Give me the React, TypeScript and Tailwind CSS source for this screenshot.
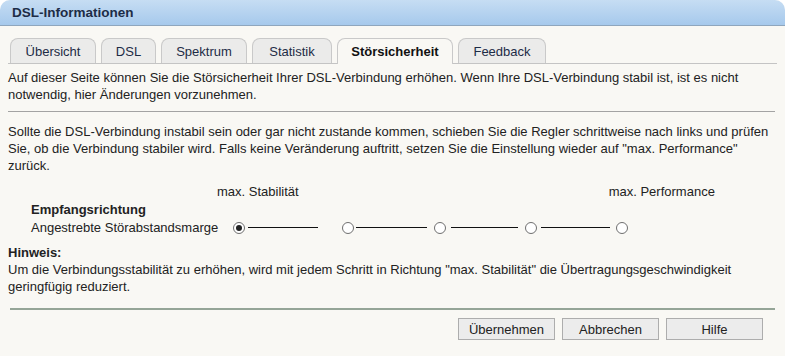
import React from "react"

const tabs = [
  { label: "Übersicht", w: "w-[86px]" },
  { label: "DSL", w: "w-[55px]" },
  { label: "Spektrum", w: "w-[86px]" },
  { label: "Statistik", w: "w-[80px]" },
  { label: "Störsicherheit", w: "w-[116px]", active: true },
  { label: "Feedback", w: "w-[88px]" },
]

const Radio = ({ checked = false }: { checked?: boolean }) => (
  <span className="flex h-[12px] w-[12px] shrink-0 items-center justify-center rounded-full border border-[#6f6f6f] bg-white">
    {checked && <span className="h-[6px] w-[6px] rounded-full bg-[#222]" />}
  </span>
)

const Line = ({ w }: { w: string }) => <span className={`h-px bg-[#111] ${w}`} />

export default function App() {
  return (
    <div className="h-[356px] w-[785px] overflow-hidden bg-white text-[13px] leading-[17px] text-[#222]" style={{ fontFamily: '"Liberation Sans", Arial, sans-serif' }}>
      <div className="h-full rounded-t-[10px] bg-[#f9f8f4]">
        <div className="flex h-[26px] items-center rounded-t-[10px] border-b border-[#8fa6bd] bg-gradient-to-b from-[#c6ddf3] to-[#a6c9ec] pl-[12px] text-[13.5px] font-bold text-[#1d2c46]">
          DSL-Informationen
        </div>

        <div className="px-[8px]">
          <div className="mt-[12px] flex gap-[5px] border-b border-[#c4c4c4] pl-[2px]">
            {tabs.map((t) => (
              <div
                key={t.label}
                className={`flex h-[25px] items-center justify-center rounded-t-[8px] border border-b-0 border-[#c9c9c9] ${t.w} ${
                  t.active ? "-mb-px h-[26px] bg-[#f9f8f4] font-bold text-[#111]" : "bg-[#ebebea] text-[#1d2c46]"
                }`}
              >
                {t.label}
              </div>
            ))}
          </div>

          <p className="mt-[5px]">
            Auf dieser Seite können Sie die Störsicherheit Ihrer DSL-Verbindung erhöhen. Wenn Ihre DSL-Verbindung stabil ist, ist es nicht notwendig, hier Änderungen vorzunehmen.
          </p>
          <div className="mt-[8px] h-px w-[767px] bg-[#a3a3a3]" />

          <p className="mt-[11px] -mr-[4px]">
            Sollte die DSL-Verbindung instabil sein oder gar nicht zustande kommen, schieben Sie die Regler schrittweise nach links und prüfen Sie, ob die Verbindung stabiler wird. Falls keine Veränderung auftritt, setzen Sie die Einstellung wieder auf "max. Performance" zurück.
          </p>

          <div className="mt-[9px] flex">
            <span className="ml-[209px]">max. Stabilität</span>
            <span className="ml-[310px]">max. Performance</span>
          </div>
          <div className="mt-px pl-[23px] font-bold">Empfangsrichtung</div>
          <div className="mt-px flex items-center pl-[23px]">
            <span className="w-[202px]">Angestrebte Störabstandsmarge</span>
            <Radio checked />
            <span className="ml-[3px]"><Line w="block w-[70px]" /></span>
            <span className="ml-[24px]"><Radio /></span>
            <span className="ml-[2px]"><Line w="block w-[71px]" /></span>
            <span className="ml-[7px]"><Radio /></span>
            <span className="ml-[5px]"><Line w="block w-[67px]" /></span>
            <span className="ml-[7px]"><Radio /></span>
            <span className="ml-[4px]"><Line w="block w-[69px]" /></span>
            <span className="ml-[6px]"><Radio /></span>
          </div>

          <div className="mt-[8px] font-bold">Hinweis:</div>
          <p className="pr-[10px]">
            Um die Verbindungsstabilität zu erhöhen, wird mit jedem Schritt in Richtung "max. Stabilität" die Übertragungsgeschwindigkeit geringfügig reduziert.
          </p>

          <div className="ml-[2px] mt-[13px] h-[2px] w-[765px] bg-[#95a597]" />

          <div className="mt-[8px] flex justify-end gap-[7px] pr-[14px]">
            {["Übernehmen", "Abbrechen", "Hilfe"].map((b) => (
              <button key={b} className="h-[22px] w-[97px] border border-[#adadad] bg-[#ececec] text-[13px] text-[#222]">
                {b}
              </button>
            ))}
          </div>
        </div>
      </div>
    </div>
  )
}
